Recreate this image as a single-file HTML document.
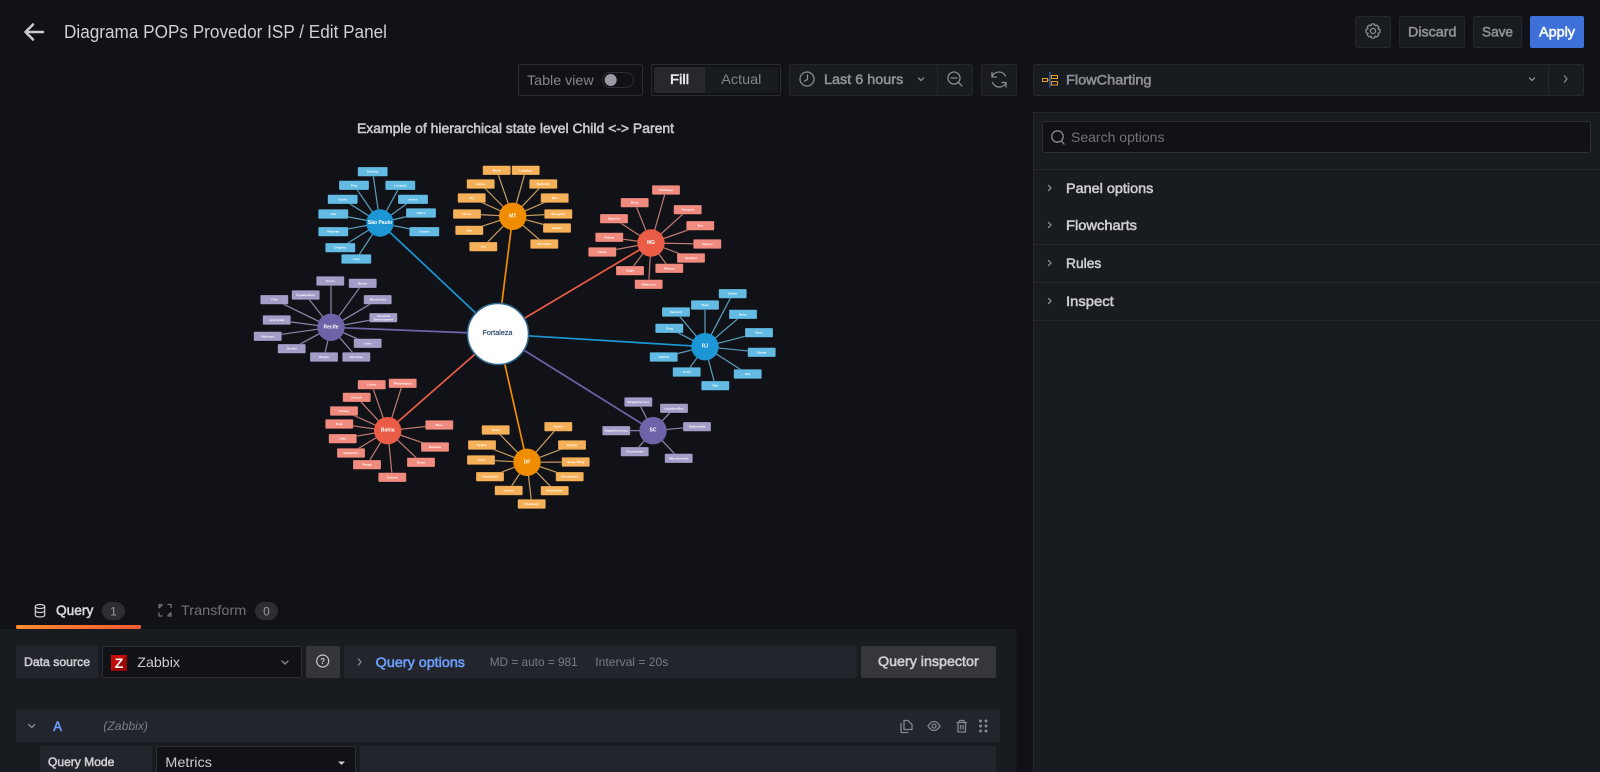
<!DOCTYPE html>
<html lang="en"><head><meta charset="utf-8"><title>Diagrama POPs Provedor ISP / Edit Panel</title>
<style>
html,body{margin:0;padding:0;width:1600px;height:772px;overflow:hidden;background:#111217}
svg{display:block}
text{font-family:"Liberation Sans",sans-serif}
.b{font-weight:400;stroke-width:.55}
.ic{fill:none;stroke:#8a8b91;stroke-width:1.3;stroke-linecap:round;stroke-linejoin:round}
.n rect{x:-14px;y:-4.7px;width:28px;height:9.4px;rx:1px;stroke:#000;stroke-opacity:.28;stroke-width:.7}
.n.w rect{x:-15px;width:30px}
.n text{font-size:3.1px;font-weight:bold;fill:#fff;text-anchor:middle;dominant-baseline:central}
.bl rect{fill:#63bbe3}.or rect{fill:#f5b05a}.rd rect{fill:#f08b80}.pu rect{fill:#a49dc8}
.hub{font-size:5px;font-weight:bold;fill:#fff;text-anchor:middle;dominant-baseline:central}
</style></head><body>
<svg width="1600" height="772" viewBox="0 0 1600 772" xmlns="http://www.w3.org/2000/svg">
<defs>
<linearGradient id="ug" x1="0" x2="1" y1="0" y2="0"><stop offset="0" stop-color="#ff8a30"/><stop offset="1" stop-color="#f05a30"/></linearGradient>
<filter id="soft" filterUnits="userSpaceOnUse" x="230" y="150" width="560" height="370"><feGaussianBlur stdDeviation=".28"/></filter>
</defs>
<rect width="1600" height="772" fill="#111217"/>

<!-- header -->
<path d="M43 32H26M33 24.500L25.500 32L33 39.500" fill="none" stroke="#c9cad0" stroke-width="2.600" stroke-linecap="round" stroke-linejoin="round"/>
<text x="64" y="38" font-size="18" fill="#cfd0d6" textLength="323" lengthAdjust="spacingAndGlyphs">Diagrama POPs Provedor ISP / Edit Panel</text>

<g fill="#181b1f" stroke="#25272c">
<rect x="1355.500" y="16.500" width="35" height="31" rx="2"/>
<rect x="1399.500" y="16.500" width="65" height="31" rx="2"/>
<rect x="1473.500" y="16.500" width="48" height="31" rx="2"/>
</g>
<rect x="1530" y="16" width="54" height="32" rx="2" fill="#3d71d9"/>
<g class="ic" transform="translate(1373 31)">
<circle r="2.600"/>
<path d="M-1.500-7H1.500L2.100-5.100L3.800-5.900L5.800-3.900L4.900-2.200L7-1.500V1.500L4.900 2.200L5.800 3.900L3.800 5.900L2.100 5.100L1.500 7H-1.500L-2.100 5.100L-3.800 5.900L-5.800 3.900L-4.900 2.200L-7 1.500V-1.500L-4.900-2.200L-5.800-3.900L-3.800-5.900L-2.100-5.100Z"/>
</g>
<text x="1408" y="36.500" font-size="14" class="b" fill="#8f9096" stroke="#8f9096" textLength="48.500" lengthAdjust="spacingAndGlyphs">Discard</text>
<text x="1482" y="36.500" font-size="14" class="b" fill="#8f9096" stroke="#8f9096" textLength="31" lengthAdjust="spacingAndGlyphs">Save</text>
<text x="1539" y="36.500" font-size="14" class="b" fill="#fff" stroke="#fff" textLength="36" lengthAdjust="spacingAndGlyphs">Apply</text>

<!-- toolbar -->
<rect x="518.500" y="64.500" width="124" height="31" rx="2" fill="none" stroke="#2a2c31"/>
<text x="527" y="85" font-size="14" fill="#84858c" textLength="66.700" lengthAdjust="spacingAndGlyphs">Table view</text>
<rect x="602.500" y="72.500" width="31" height="15" rx="7.500" fill="none" stroke="#2e3036"/>
<circle cx="610.700" cy="80" r="6" fill="#9a9aa4"/>

<rect x="651.500" y="64.500" width="129" height="31" rx="2" fill="#111217" stroke="#2a2c31"/>
<rect x="654" y="67" width="124" height="26" rx="2" fill="#181b1f"/>
<rect x="654" y="67" width="51" height="26" rx="2" fill="#26282e"/>
<text x="670" y="84" font-size="14" class="b" fill="#e8e8ea" stroke="#e8e8ea" textLength="19" lengthAdjust="spacingAndGlyphs">Fill</text>
<text x="721.300" y="84" font-size="14" fill="#84858c" textLength="40" lengthAdjust="spacingAndGlyphs">Actual</text>

<rect x="789.500" y="64.500" width="183" height="31" rx="2" fill="#181b1f" stroke="#25272c"/>
<path d="M937.500 65V95" stroke="#25272c"/>
<g class="ic"><circle cx="807" cy="79" r="7"/><path d="M807.500 75V79.500L804.500 81"/></g>
<text x="824" y="84" font-size="14" class="b" fill="#8f9096" stroke="#8f9096" textLength="79.300" lengthAdjust="spacingAndGlyphs">Last 6 hours</text>
<path class="ic" d="M918.500 78L921 80.500L923.500 78"/>
<g class="ic"><circle cx="954" cy="78" r="6"/><path d="M951 78H957M958.500 82.500L962 86"/></g>
<rect x="981.500" y="64.500" width="35" height="31" rx="2" fill="#181b1f" stroke="#25272c"/>
<g class="ic"><path d="M992 77C993 73.500 996 72 999 72C1002 72 1004.500 73.800 1005.500 76M1006 83C1005 85 1002.500 87 999 87C996 87 993.500 85 992.500 82.500"/><path d="M992 72.500V77H996.500M1006 87V82.500H1002"/></g>

<rect x="1033.500" y="64.500" width="550" height="31" rx="2" fill="#181b1f" stroke="#25272c"/>
<path d="M1548.500 65V95" stroke="#25272c"/>
<g fill="none" stroke-width="1">
<rect x="1042.500" y="78.500" width="5" height="3" stroke="#e5a020"/>
<path d="M1047.500 80H1050" stroke="#e5a020"/>
<path d="M1050 72V87" stroke="#2f6fc4" stroke-width="1.300"/>
<rect x="1051.500" y="75.500" width="6" height="3" stroke="#e5a020"/>
<rect x="1051.500" y="81.500" width="6" height="3.500" stroke="#e5922a"/>
</g>
<text x="1066" y="84.500" font-size="14" class="b" fill="#8f9096" stroke="#8f9096" textLength="85.500" lengthAdjust="spacingAndGlyphs">FlowCharting</text>
<path class="ic" d="M1529.500 78L1532 80.500L1534.500 78M1564.500 76L1567 79L1564.500 82"/>

<!-- right panel -->
<rect x="1033.500" y="112.500" width="570" height="664" fill="#181b1f" stroke="#25272c"/>
<rect x="1042.500" y="121.500" width="548" height="31" rx="2" fill="#111217" stroke="#2c2e33"/>
<g class="ic"><circle cx="1057.500" cy="136.500" r="5.700"/><path d="M1061.500 141L1064 144"/></g>
<text x="1071" y="142" font-size="14" fill="#71727a" textLength="93.500" lengthAdjust="spacingAndGlyphs">Search options</text>
<path d="M1034 169.500H1600M1034 244.500H1600M1034 282.500H1600M1034 320.500H1600" stroke="#25272c"/>
<path class="ic" d="M1048.500 185.500L1051 188L1048.500 190.500M1048.500 222.500L1051 225L1048.500 227.500M1048.500 260.500L1051 263L1048.500 265.500M1048.500 298.500L1051 301L1048.500 303.500"/>
<g font-size="14" class="b" fill="#ccccd2" stroke="#ccccd2">
<text x="1066" y="193" textLength="87.300" lengthAdjust="spacingAndGlyphs">Panel options</text>
<text x="1066" y="230" textLength="71" lengthAdjust="spacingAndGlyphs">Flowcharts</text>
<text x="1066" y="268" textLength="35.300" lengthAdjust="spacingAndGlyphs">Rules</text>
<text x="1066" y="306" textLength="47.700" lengthAdjust="spacingAndGlyphs">Inspect</text>
</g>

<!-- diagram -->
<text x="357" y="133" font-size="14" class="b" fill="#c9cad0" stroke="#c9cad0" textLength="317" lengthAdjust="spacingAndGlyphs">Example of hierarchical state level Child &lt;-&gt; Parent</text>

<g filter="url(#soft)">
<g fill="none" stroke-width="1.200">
<path stroke="#5c9fbe" d="M380 223L372.700 171.700M380 223L354 185.300M380 223L400.300 185.300M380 223L413 199.300M380 223L342.700 199.300M380 223L421 213M380 223L333.300 214M380 223L424.300 231.700M380 223L333.300 231.700M380 223L340.300 247.700M380 223L356.300 259"/>
<path stroke="#c79d62" d="M512.700 216.300L496.700 170.300M512.700 216.300L480.700 184M512.700 216.300L471.700 198M512.700 216.300L467 214M512.700 216.300L469.300 230.300M512.700 216.300L483.300 246.700M512.700 216.300L525.700 170.300M512.700 216.300L543.300 184M512.700 216.300L554.700 198M512.700 216.300L558.300 214M512.700 216.300L557 228M512.700 216.300L544.300 244"/>
<path stroke="#c07a70" d="M651 243L666 190M651 243L634.700 202.700M651 243L687.700 209.700M651 243L614 218.700M651 243L700.300 225.700M651 243L609.300 237.300M651 243L707.300 244M651 243L602.300 252M651 243L691 258M651 243L669.300 268.300M651 243L630 270.700M651 243L648.700 284.300"/>
<path stroke="#5c9fbe" d="M705 346.700L732.700 293.700M705 346.700V305M705 346.700L676 312M705 346.700L743 314.300M705 346.700L669.300 328.300M705 346.700L759 332.700M705 346.700L761.700 352.300M705 346.700L663.700 357M705 346.700L686.700 372M705 346.700L747.700 374M705 346.700L715.300 385.700"/>
<path stroke="#8d88ab" d="M653 430.700L638.300 402M653 430.700L674 408.300M653 430.700L697 426.700M653 430.700H616.300M653 430.700L634.700 451.700M653 430.700L678.700 458.300"/>
<path stroke="#c79d62" d="M527 462.300L558.300 426.700M527 462.300L572 445M527 462.300L575.700 462M527 462.300L569.700 476.700M527 462.300L554.700 490.700M527 462.300L508.700 490.500M527 462.300L495.700 430M527 462.300L482 445M527 462.300L481 460M527 462.300L490 476.700M527 462.300L531.700 504"/>
<path stroke="#c07a70" d="M387.700 430.700L402.700 383.300M387.700 430.700L371.700 384.700M387.700 430.700L356.700 397.300M387.700 430.700L344 411M387.700 430.700L339.300 424M387.700 430.700L439.300 425M387.700 430.700L342.700 438.700M387.700 430.700L435 447M387.700 430.700L351 453M387.700 430.700L367 464.700M387.700 430.700L421 462.300M387.700 430.700L392.300 477.300"/>
<path stroke="#8d88ab" d="M331 327.300V281M331 327.300L362.700 283.300M331 327.300L305.700 295M331 327.300L274.300 299.700M331 327.300L377.700 299.700M331 327.300L383.300 317.700M331 327.300L276.700 320M331 327.300L267.700 336.300M331 327.300L367.700 343.300M331 327.300L291.700 348.700M331 327.300L324 357M331 327.300L356.300 357"/>
</g>
<g fill="none" stroke-width="1.700">
<path stroke="#1a96d4" d="M498 334L380 223M498 334L705 346.700"/>
<path stroke="#f08c00" d="M498 334L512.700 216.300M498 334L527 462.300"/>
<path stroke="#ea5b45" d="M498 334L651 243M498 334L387.700 430.700"/>
<path stroke="#6e64a8" d="M498 334L331 327.300M498 334L653 430.700"/>
</g>

<g class="n w bl">
<g transform="translate(372.700 171.700)"><rect/><text>Donkey</text></g>
<g transform="translate(354 185.300)"><rect/><text>Dog</text></g>
<g transform="translate(400.300 185.300)"><rect/><text>Leopard</text></g>
<g transform="translate(413 199.300)"><rect/><text>Horse</text></g>
<g transform="translate(342.700 199.300)"><rect/><text>Goofy</text></g>
<g transform="translate(421 213)"><rect/><text>Zebra</text></g>
<g transform="translate(333.300 214)"><rect/><text>Cat</text></g>
<g transform="translate(424.300 231.700)"><rect/><text>Goose</text></g>
<g transform="translate(333.300 231.700)"><rect/><text>Raijman</text></g>
<g transform="translate(340.300 247.700)"><rect/><text>Dolphin</text></g>
<g transform="translate(356.300 259)"><rect/><text>Lion</text></g>
</g>
<g class="n or">
<g transform="translate(496.700 170.300)"><rect/><text>Mario</text></g>
<g transform="translate(480.700 184)"><rect/><text>Ganso</text></g>
<g transform="translate(471.700 198)"><rect/><text>Fly</text></g>
<g transform="translate(467 214)"><rect/><text>Horse</text></g>
<g transform="translate(469.300 230.300)"><rect/><text>Bee</text></g>
<g transform="translate(483.300 246.700)"><rect/><text>Ant</text></g>
<g transform="translate(525.700 170.300)"><rect/><text>Ladybug</text></g>
<g transform="translate(543.300 184)"><rect/><text>Butterfly</text></g>
<g transform="translate(554.700 198)"><rect/><text>Bee</text></g>
<g transform="translate(558.300 214)"><rect/><text>Mosquito</text></g>
<g transform="translate(557 228)"><rect/><text>Spider</text></g>
<g transform="translate(544.300 244)"><rect/><text>Sunshine</text></g>
</g>
<g class="n rd">
<g transform="translate(666 190)"><rect/><text>Flamingo</text></g>
<g transform="translate(634.700 202.700)"><rect/><text>Duck</text></g>
<g transform="translate(687.700 209.700)"><rect/><text>Penguin</text></g>
<g transform="translate(614 218.700)"><rect/><text>Sparrow</text></g>
<g transform="translate(700.300 225.700)"><rect/><text>Bat</text></g>
<g transform="translate(609.300 237.300)"><rect/><text>Falcon</text></g>
<g transform="translate(707.300 244)"><rect/><text>Pigeon</text></g>
<g transform="translate(602.300 252)"><rect/><text>Hawk</text></g>
<g transform="translate(691 258)"><rect/><text>Seabird</text></g>
<g transform="translate(669.300 268.300)"><rect/><text>Pelican</text></g>
<g transform="translate(630 270.700)"><rect/><text>Eagle</text></g>
<g transform="translate(648.700 284.300)"><rect/><text>Albatross</text></g>
</g>
<g class="n bl">
<g transform="translate(732.700 293.700)"><rect/><text>Shark</text></g>
<g transform="translate(705 305)"><rect/><text>Tuna</text></g>
<g transform="translate(676 312)"><rect/><text>Mustard</text></g>
<g transform="translate(743 314.300)"><rect/><text>Moon</text></g>
<g transform="translate(669.300 328.300)"><rect/><text>Frog</text></g>
<g transform="translate(759 332.700)"><rect/><text>Bass</text></g>
<g transform="translate(761.700 352.300)"><rect/><text>Oyster</text></g>
<g transform="translate(663.700 357)"><rect/><text>Catfish</text></g>
<g transform="translate(686.700 372)"><rect/><text>Trout</text></g>
<g transform="translate(747.700 374)"><rect/><text>Eel</text></g>
<g transform="translate(715.300 385.700)"><rect/><text>Ray</text></g>
</g>
<g class="n pu">
<g transform="translate(638.300 402)"><rect/><text>Streptococcus</text></g>
<g transform="translate(674 408.300)"><rect/><text>Lactobacillus</text></g>
<g transform="translate(697 426.700)"><rect/><text>Salmonella</text></g>
<g transform="translate(616.300 430.700)"><rect/><text>Staphylococcus</text></g>
<g transform="translate(634.700 451.700)"><rect/><text>Clostridium</text></g>
<g transform="translate(678.700 458.300)"><rect/><text>Mitochondria</text></g>
</g>
<g class="n or">
<g transform="translate(558.300 426.700)"><rect/><text>Oyster</text></g>
<g transform="translate(572 445)"><rect/><text>Pygmy</text></g>
<g transform="translate(575.700 462)"><rect/><text>Snipe Wing</text></g>
<g transform="translate(569.700 476.700)"><rect/><text>Anonymous</text></g>
<g transform="translate(554.700 490.700)"><rect/><text>Bumblebee</text></g>
<g transform="translate(508.700 490.500)"><rect/><text>Lemon</text></g>
<g transform="translate(495.700 430)"><rect/><text>Turtle</text></g>
<g transform="translate(482 445)"><rect/><text>Pygmy</text></g>
<g transform="translate(481 460)"><rect/><text>Toad</text></g>
<g transform="translate(490 476.700)"><rect/><text>Rosefinch</text></g>
<g transform="translate(531.700 504)"><rect/><text>Blueberry</text></g>
</g>
<g class="n rd">
<g transform="translate(402.700 383.300)"><rect/><text>Philadelphia</text></g>
<g transform="translate(371.700 384.700)"><rect/><text>Carlos</text></g>
<g transform="translate(356.700 397.300)"><rect/><text>French</text></g>
<g transform="translate(344 411)"><rect/><text>Canary</text></g>
<g transform="translate(339.300 424)"><rect/><text>Pulp</text></g>
<g transform="translate(439.300 425)"><rect/><text>Bass</text></g>
<g transform="translate(342.700 438.700)"><rect/><text>Lilac</text></g>
<g transform="translate(435 447)"><rect/><text>Gladiola</text></g>
<g transform="translate(351 453)"><rect/><text>Dandelion</text></g>
<g transform="translate(367 464.700)"><rect/><text>Poppy</text></g>
<g transform="translate(421 462.300)"><rect/><text>Rebel</text></g>
<g transform="translate(392.300 477.300)"><rect/><text>Gebera</text></g>
</g>
<g class="n pu">
<g transform="translate(330.300 281)"><rect/><text>Cross</text></g>
<g transform="translate(362.700 283.300)"><rect/><text>Rivets</text></g>
<g transform="translate(305.700 295)"><rect/><text>Organization</text></g>
<g transform="translate(274.300 299.700)"><rect/><text>Flea</text></g>
<g transform="translate(377.700 299.700)"><rect/><text>Mushroom</text></g>
<g transform="translate(383.300 317.700)"><rect/><text y="-1.500">Personal</text><text y="1.800">Development</text></g>
<g transform="translate(276.700 320)"><rect/><text>Arachnida</text></g>
<g transform="translate(267.700 336.300)"><rect/><text>Hibiscus</text></g>
<g transform="translate(367.700 343.300)"><rect/><text>Lime</text></g>
<g transform="translate(291.700 348.700)"><rect/><text>Orchid</text></g>
<g transform="translate(324 357)"><rect/><text>Bonds</text></g>
<g transform="translate(356.300 357)"><rect/><text>Gloomsa</text></g>
</g>

<g>
<circle cx="380" cy="223" r="13.700" fill="#1a96d4"/><text class="hub" x="380" y="223">São Paulo</text>
<circle cx="512.700" cy="216.300" r="13.700" fill="#f08c00"/><text class="hub" x="512.700" y="216.300">MT</text>
<circle cx="651" cy="243" r="13.700" fill="#ea5b45"/><text class="hub" x="651" y="243">MG</text>
<circle cx="705" cy="346.700" r="13.700" fill="#1a96d4"/><text class="hub" x="705" y="346.700">RJ</text>
<circle cx="653" cy="430.700" r="13.700" fill="#6e64a8"/><text class="hub" x="653" y="430.700">SC</text>
<circle cx="527" cy="462.300" r="13.700" fill="#f08c00"/><text class="hub" x="527" y="462.300">DF</text>
<circle cx="387.700" cy="430.700" r="13.700" fill="#ea5b45"/><text class="hub" x="387.700" y="430.700">Bahia</text>
<circle cx="331" cy="327.300" r="13.700" fill="#6e64a8"/><text class="hub" x="331" y="327.300">Recife</text>
<circle cx="498" cy="334" r="30.500" fill="#fff" stroke="#2f6a8f" stroke-width="1.500"/>
<text x="497.500" y="333.500" font-size="7" fill="#1f3f60" stroke="#1f3f60" stroke-width=".15" text-anchor="middle" dominant-baseline="central" textLength="30" lengthAdjust="spacingAndGlyphs">Fortaleza</text>
</g>
</g>

<!-- tabs -->
<rect x="0" y="629" width="1016.700" height="143" fill="#181b1f"/>
<rect x="16" y="625" width="125" height="4" rx="1.500" fill="url(#ug)"/>
<g fill="none" stroke="#d0d1d6" stroke-width="1.200"><ellipse cx="40" cy="606.500" rx="4.700" ry="2"/><path d="M35.300 606.500V615C35.300 616.300 37.500 617 40 617C42.500 617 44.700 616.300 44.700 615V606.500M35.300 610.500C35.300 611.800 37.500 612.500 40 612.500C42.500 612.500 44.700 611.800 44.700 610.500"/></g>
<text x="56" y="615" font-size="14" class="b" fill="#d8d9de" stroke="#d8d9de" textLength="37.300" lengthAdjust="spacingAndGlyphs">Query</text>
<rect x="102" y="602" width="23" height="18" rx="9" fill="#2c2e33"/>
<text x="113.500" y="615.500" font-size="12" fill="#9a9ba1" text-anchor="middle">1</text>
<path d="M159 608V604.500H162.500M167.500 604.500H171V608M171 612.500V616H167.500M162.500 616H159V612.500M162.500 604.500L159 608M167.500 616L171 612.500" fill="none" stroke="#72737a" stroke-width="1.300"/>
<text x="181" y="615" font-size="14" fill="#72737a" textLength="65.300" lengthAdjust="spacingAndGlyphs">Transform</text>
<rect x="255" y="602" width="23" height="18" rx="9" fill="#2c2e33"/>
<text x="266.500" y="615.500" font-size="12" fill="#9a9ba1" text-anchor="middle">0</text>

<!-- query row -->
<rect x="16" y="646" width="82" height="32" rx="2" fill="#22252b"/>
<text x="24" y="666" font-size="12" class="b" fill="#ccccd2" stroke="#ccccd2" textLength="66" lengthAdjust="spacingAndGlyphs">Data source</text>
<rect x="102.500" y="646.500" width="199" height="31" rx="2" fill="#111217" stroke="#2c2e33"/>
<rect x="111" y="655" width="16" height="16" fill="#c40a0a"/>
<path d="M127 655V671H111Z" fill="#000" opacity=".22"/>
<text x="119" y="668" font-size="14" font-weight="bold" fill="#fff" text-anchor="middle">Z</text>
<text x="137.300" y="667" font-size="14" fill="#ccccd2" textLength="42.700" lengthAdjust="spacingAndGlyphs">Zabbix</text>
<path class="ic" d="M282 661L285 664L288 661"/>
<rect x="306" y="646" width="34" height="32" rx="2" fill="#33353a"/>
<circle cx="322.700" cy="661" r="6" fill="none" stroke="#c9cad0" stroke-width="1.200"/>
<text x="322.700" y="664" font-size="8" font-weight="bold" fill="#c9cad0" text-anchor="middle">?</text>
<rect x="344" y="646" width="512.700" height="32" rx="2" fill="#22252b"/>
<path class="ic" d="M358.500 659L361 662L358.500 665"/>
<text x="375.700" y="667" font-size="14" class="b" fill="#6e9fff" stroke="#6e9fff" textLength="89.300" lengthAdjust="spacingAndGlyphs">Query options</text>
<text x="489.700" y="666" font-size="12" fill="#7b7c82" textLength="88" lengthAdjust="spacingAndGlyphs">MD = auto = 981</text>
<text x="595.300" y="666" font-size="12" fill="#7b7c82" textLength="73" lengthAdjust="spacingAndGlyphs">Interval = 20s</text>
<rect x="861" y="646" width="135" height="32" rx="2" fill="#35373c"/>
<text x="878" y="666" font-size="14" class="b" fill="#d0d1d6" stroke="#d0d1d6" textLength="100.700" lengthAdjust="spacingAndGlyphs">Query inspector</text>

<!-- A row -->
<rect x="16" y="710" width="984" height="32" rx="2" fill="#22252b"/>
<path class="ic" d="M28.700 724.500L31.700 727.500L34.700 724.500"/>
<text x="53.300" y="731" font-size="14" class="b" fill="#6e9fff" stroke="#6e9fff" textLength="8.700" lengthAdjust="spacingAndGlyphs">A</text>
<text x="103.300" y="730" font-size="12" font-style="italic" fill="#7b7c82" textLength="44.700" lengthAdjust="spacingAndGlyphs">(Zabbix)</text>
<g fill="none" stroke="#85868c" stroke-width="1.300" stroke-linejoin="round">
<path d="M904 720.500H908L912 724.500V729.500H904Z"/><path d="M901 723V732.500H908.500"/>
<path d="M928 726C930 722.800 932 721.500 934 721.500C936 721.500 938 722.800 940 726C938 729.200 936 730.500 934 730.500C932 730.500 930 729.200 928 726Z"/><circle cx="934" cy="726" r="2"/>
<path d="M956.500 722.500H967M959.500 722.500V720.500H964V722.500M958 722.500V732H965.500V722.500M960.500 725V729.500M963 725V729.500"/>
</g>
<g fill="#85868c"><circle cx="980.500" cy="721" r="1.500"/><circle cx="986" cy="721" r="1.500"/><circle cx="980.500" cy="726" r="1.500"/><circle cx="986" cy="726" r="1.500"/><circle cx="980.500" cy="731" r="1.500"/><circle cx="986" cy="731" r="1.500"/></g>

<rect x="40" y="746" width="112" height="30" rx="2" fill="#22252b"/>
<text x="48" y="766" font-size="12" class="b" fill="#ccccd2" stroke="#ccccd2" textLength="66.300" lengthAdjust="spacingAndGlyphs">Query Mode</text>
<rect x="156.500" y="746.500" width="199" height="30" rx="2" fill="#111217" stroke="#2c2e33"/>
<text x="165.300" y="767" font-size="14" fill="#ccccd2" textLength="46.700" lengthAdjust="spacingAndGlyphs">Metrics</text>
<path d="M338 761.500H345L341.500 765Z" fill="#ccccd2"/>
<rect x="360" y="746" width="636" height="30" rx="2" fill="#22252b"/>
</svg>
</body></html>
